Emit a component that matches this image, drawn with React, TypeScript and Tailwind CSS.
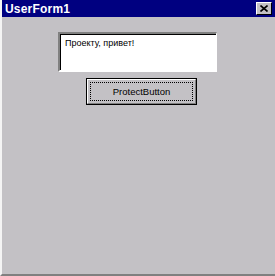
export default function App() {
  return (
    <div className="w-[275px] h-[276px] bg-[#c3c1c5] border-l-2 border-l-[#f4f4f4] border-b-2 border-b-[#808080] flex flex-col overflow-hidden" style={{ fontFamily: '"Liberation Sans", Arial, sans-serif' }}>
      <div className="h-[17px] bg-[#000080] flex items-center justify-between pl-[3px] pr-[3px] shrink-0">
        <span className="text-white font-bold text-[12px] leading-none tracking-[0.2px]">UserForm1</span>
        <div className="w-[16px] h-[13px] bg-[#c3c1c5] border-t border-l border-t-white border-l-white border-b border-r border-b-black border-r-black flex items-center justify-center">
          <svg width="8" height="7" viewBox="0 0 8 7">
            <path d="M0.5 0.5 L7.5 6.5 M7.5 0.5 L0.5 6.5" stroke="black" strokeWidth="1.6" />
          </svg>
        </div>
      </div>
      <div className="flex flex-col pt-[15px]">
        <div className="ml-[56px] w-[159px] h-[40px] border-t-2 border-l-2 border-t-[#808080] border-l-[#808080] border-b-2 border-b-white border-r border-r-white">
          <div className="w-full h-full bg-white border-t border-l border-black pl-[4px] pt-[3px] text-[9px] leading-[11px] text-black">
            Проекту, привет!
          </div>
        </div>
        <div className="ml-[84px] mt-[6px] w-[111px] h-[27px] border border-black">
          <div className="w-full h-full border-t border-l border-t-white border-l-white border-b border-r border-b-[#808080] border-r-[#808080] p-[2px]">
            <div className="w-full h-full border border-dotted border-black flex items-center justify-center text-[9.5px] text-black leading-none">
              ProtectButton
            </div>
          </div>
        </div>
      </div>
    </div>
  );
}
